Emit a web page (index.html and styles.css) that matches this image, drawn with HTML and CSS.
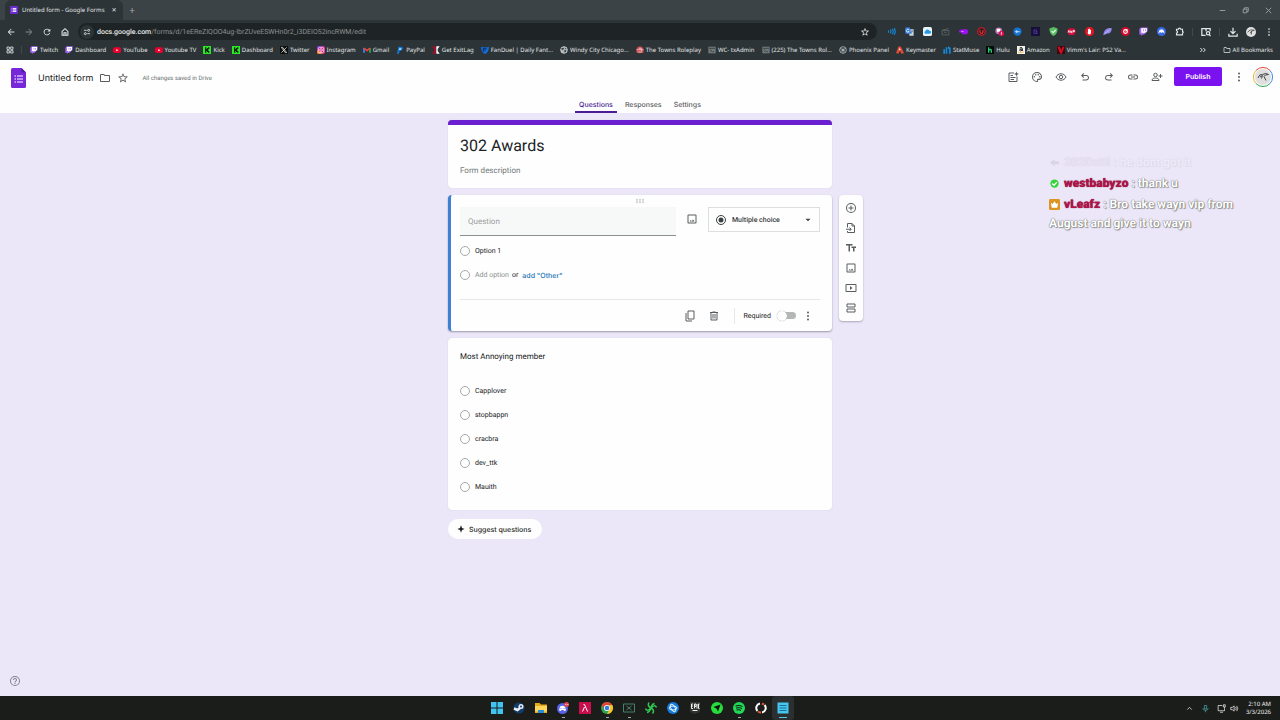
FILE: index.html
```html
<!DOCTYPE html>
<html lang="en">
<head>
<meta charset="utf-8">
<title>Untitled form - Google Forms</title>
<link rel="stylesheet" href="styles.css">
</head>
<body>
<svg class="sprite" aria-hidden="true">
	<symbol id="i-back" viewBox="0 0 24 24"><path d="M20 11H7.800l5.600-5.600L12 4l-8 8 8 8 1.400-1.400L7.800 13H20z"/></symbol>
	<symbol id="i-fwd" viewBox="0 0 24 24"><path d="M4 11h12.200l-5.600-5.600L12 4l8 8-8 8-1.400-1.400 5.600-5.600H4z"/></symbol>
	<symbol id="i-reload" viewBox="0 0 24 24"><path d="M17.650 6.350A8 8 0 1 0 19.730 14h-2.080A6 6 0 1 1 12 6c1.660 0 3.140.69 4.220 1.780L13 11h7V4z"/></symbol>
	<symbol id="i-home" viewBox="0 0 24 24"><path fill="none" stroke="currentColor" stroke-width="2.500" d="M5 10.500 12 4l7 6.500V20H5zM9.500 20v-6h5v6"/></symbol>
	<symbol id="i-tune" viewBox="0 0 24 24"><g fill="none" stroke="currentColor" stroke-width="2.500"><path d="M3 7h8M13 17h8"/><circle cx="17" cy="7" r="3"/><circle cx="7" cy="17" r="3"/></g></symbol>
	<symbol id="i-star" viewBox="0 0 24 24"><path d="m22 9.240-7.190-.62L12 2 9.190 8.630 2 9.240l5.460 4.730L5.820 21 12 17.270 18.180 21l-1.630-7.030zM12 15.400l-3.760 2.270 1-4.280-3.320-2.880 4.380-.38L12 6.100l1.710 4.040 4.380.38-3.320 2.880 1 4.280z"/></symbol>
	<symbol id="i-apps" viewBox="0 0 24 24"><path fill="none" stroke="currentColor" stroke-width="2.500" d="M3 3h7v7H3zM14 3h7v7h-7zM3 14h7v7H3zM14 14h7v7h-7z"/></symbol>
	<symbol id="i-folder" viewBox="0 0 24 24"><path d="m9.170 6 2 2H20v10H4V6zM10 4H4a2 2 0 0 0-2 2v12c0 1.100.9 2 2 2h16a2 2 0 0 0 2-2V8a2 2 0 0 0-2-2h-8z"/></symbol>
	<symbol id="i-more" viewBox="0 0 24 24"><circle cx="12" cy="5" r="2"/><circle cx="12" cy="12" r="2"/><circle cx="12" cy="19" r="2"/></symbol>
	<symbol id="i-palette" viewBox="0 0 24 24"><path d="M12 22a10 10 0 1 1 10-10c0 3.300-2.700 6-6 6h-1.700c-.3 0-.5.2-.5.5 0 .3.5.7.5 1.500 0 1.200-1 2-2.300 2m0-18a8 8 0 0 0 0 16c.3 0 .5-.2.5-.5 0-.5-.6-.7-.6-1.500 0-1.400 1.100-2.500 2.500-2.500H16c2.200 0 4-1.800 4-4C20 7.100 16.400 4 12 4"/><circle cx="6.500" cy="11.500" r="1.500"/><circle cx="9.500" cy="7.500" r="1.500"/><circle cx="14.500" cy="7.500" r="1.500"/><circle cx="17.500" cy="11.500" r="1.500"/></symbol>
	<symbol id="i-eye" viewBox="0 0 24 24"><path fill="none" stroke="currentColor" stroke-width="2" d="M2 12c2-4 5.700-6.500 10-6.500S20 8 22 12c-2 4-5.700 6.500-10 6.500S4 16 2 12z"/><circle cx="12" cy="12" r="3.500" fill="none" stroke="currentColor" stroke-width="2"/></symbol>
	<symbol id="i-undo" viewBox="0 0 24 24"><path d="M7 19v-2h7.100c1.050 0 1.960-.33 2.740-1s1.160-1.500 1.160-2.500-.39-1.830-1.160-2.500-1.690-1-2.740-1H7.800l2.600 2.600L9 14 4 9l5-5 1.400 1.400L7.800 8h6.300c1.620 0 3 .53 4.160 1.580S20 11.930 20 13.500s-.58 2.880-1.740 3.930S15.720 19 14.100 19z"/></symbol>
	<symbol id="i-redo" viewBox="0 0 24 24"><path transform="matrix(-1 0 0 1 24 0)" d="M7 19v-2h7.100c1.050 0 1.960-.33 2.740-1s1.160-1.500 1.160-2.500-.39-1.830-1.160-2.500-1.690-1-2.740-1H7.800l2.600 2.600L9 14 4 9l5-5 1.400 1.400L7.800 8h6.300c1.620 0 3 .53 4.160 1.580S20 11.930 20 13.500s-.58 2.880-1.740 3.930S15.720 19 14.100 19z"/></symbol>
	<symbol id="i-link" viewBox="0 0 24 24"><path d="M3.900 12A3.100 3.100 0 0 1 7 8.900h4V7H7a5 5 0 0 0 0 10h4v-1.900H7A3.100 3.100 0 0 1 3.900 12M8 13h8v-2H8zm9-6h-4v1.900h4a3.100 3.100 0 0 1 0 6.200h-4V17h4a5 5 0 0 0 0-10"/></symbol>
	<symbol id="i-person" viewBox="0 0 24 24"><g fill="none" stroke="currentColor" stroke-width="2"><circle cx="9" cy="8" r="3.500"/><path d="M2 19v-1c0-2.500 4-4 7-4s7 1.500 7 4v1zM19 6v8M15 10h8"/></g></symbol>
	<symbol id="i-addnote" viewBox="0 0 24 24"><path fill="none" stroke="currentColor" stroke-width="2" d="M14 4H4v17h16V11M7 9h5M7 13h10M7 17h7"/><path d="m19 1 1.300 3.700L24 6l-3.700 1.300L19 11l-1.300-3.700L14 6l3.700-1.300z"/></symbol>
	<symbol id="i-image" viewBox="0 0 24 24"><path d="M19 5v14H5V5zm0-2H5a2 2 0 0 0-2 2v14c0 1.100.9 2 2 2h14a2 2 0 0 0 2-2V5a2 2 0 0 0-2-2m-4.900 10-2.600 3.300-1.800-2.200L7 17h10z"/></symbol>
	<symbol id="i-copy" viewBox="0 0 24 24"><path fill="none" stroke="currentColor" stroke-width="2" d="M8 2h12v16H8zM4 6v16h12"/></symbol>
	<symbol id="i-trash" viewBox="0 0 24 24"><path d="M15 4V3H9v1H4v2h1v13c0 1.100.9 2 2 2h10a2 2 0 0 0 2-2V6h1V4zm2 15H7V6h10zM9 8h2v9H9zm4 0h2v9h-2z"/></symbol>
	<symbol id="i-plus" viewBox="0 0 24 24"><path d="M13 7h-2v4H7v2h4v4h2v-4h4v-2h-4zm-1-5a10 10 0 1 0 0 20 10 10 0 0 0 0-20m0 18a8 8 0 1 1 0-16 8 8 0 0 1 0 16"/></symbol>
	<symbol id="i-import" viewBox="0 0 24 24"><path fill="none" stroke="currentColor" stroke-width="2" d="M5 11V3h9l5 5v13H5v-3M14 3v5h5M2 14.500h10M9 11l3.500 3.500L9 18"/></symbol>
	<symbol id="i-text" viewBox="0 0 24 24"><path d="M2 4v3h5v12h3V7h5V4zm20 5h-9v3h3v7h3v-7h3z"/></symbol>
	<symbol id="i-video" viewBox="0 0 24 24"><path d="M10 8v8l5-4zM21 4H3a2 2 0 0 0-2 2v12c0 1.100.9 2 2 2h18a2 2 0 0 0 2-2V6a2 2 0 0 0-2-2m0 14H3V6h18z"/></symbol>
	<symbol id="i-section" viewBox="0 0 24 24"><path fill="none" stroke="currentColor" stroke-width="2" d="M4 4h16v6H4zM4 14h16v6H4z"/></symbol>
	<symbol id="i-help" viewBox="0 0 24 24"><path d="M11 18h2v-2h-2zm1-16a10 10 0 1 0 0 20 10 10 0 0 0 0-20m0 18a8 8 0 1 1 0-16 8 8 0 0 1 0 16m0-14a4 4 0 0 0-4 4h2a2 2 0 1 1 4 0c0 2-3 1.750-3 5h2c0-2.250 3-2.500 3-5a4 4 0 0 0-4-4"/></symbol>
	<symbol id="i-twitch" viewBox="0 0 24 24"><path fill="#a56bf5" d="M5 1 1 5v15h5v4l4-4h4l9-9V1z"/><path fill="#fff" d="M6 3h15v8l-4 4h-4l-3 3v-3H6z"/><path fill="#a56bf5" d="M11 6h2v5h-2zM16 6h2v5h-2z"/></symbol>
	<symbol id="i-youtube" viewBox="0 0 24 24"><rect y="4" width="24" height="17" rx="5" fill="#e8002d"/><path fill="#fff" d="m10 9 6 3.500-6 3.500z"/></symbol>
	<symbol id="i-kick" viewBox="0 0 24 24"><path fill="#2bea24" d="M0 0h24v24H0z"/><path fill="#10210f" d="M6 4h4v5h2V6h3V4h4v5h-3v6h3v5h-4v-2h-3v-3h-2v5H6z"/></symbol>
	<symbol id="i-server" viewBox="0 0 24 24"><path fill="#71787a" d="M1 2h22v20H1z"/><path stroke="#272d2f" stroke-width="2" fill="none" d="M3 7h18M7 11l4 3-4 3M13 17h5"/></symbol>
</svg>

<header class="browser">
	<div class="tabbar">
		<div class="tab">
			<svg class="fav" viewBox="0 0 24 24"><rect width="24" height="24" rx="3" fill="#6a2bd0"/><path stroke="#fff" stroke-width="3" d="M9 8h10M9 12h10M9 16h10M5 8h2M5 12h2M5 16h2"/></svg>
			<span class="tab-name">Untitled form - Google Forms</span>
			<button class="tab-x" aria-label="Close tab">✕</button>
		</div>
		<button class="tab-new" aria-label="New tab">+</button>
		<div class="win">
			<button aria-label="Minimize"><svg viewBox="0 0 12 12" fill="none"><path d="M3 6h6"/></svg></button>
			<button aria-label="Restore"><svg viewBox="0 0 12 12" fill="none"><path d="M3.500 4.500h4v4h-4zM5 4.500V3h4v4H7.500"/></svg></button>
			<button aria-label="Close"><svg viewBox="0 0 12 12" fill="none"><path d="m3 3 6 6M9 3 3 9"/></svg></button>
		</div>
	</div>
	<div class="toolbar">
		<button aria-label="Back"><svg><use href="#i-back"/></svg></button>
		<button class="dim" aria-label="Forward"><svg><use href="#i-fwd"/></svg></button>
		<button aria-label="Reload"><svg><use href="#i-reload"/></svg></button>
		<button aria-label="Home"><svg><use href="#i-home"/></svg></button>
		<div class="address">
			<span class="site"><svg><use href="#i-tune"/></svg></span>
			<span class="url"><b>docs.google.com</b>/forms/d/1eEReZIQOO4ug-IbrZUveESWHn0r2_i3DEIO52incRWM/edit</span>
			<svg><use href="#i-star"/></svg>
		</div>
		<div class="ext">
			<button aria-label="Sound"><svg viewBox="0 0 24 24" fill="none" stroke="#1688d8" stroke-width="3"><path d="M4 9v6M9 7q3 5 0 10M14 5q5 7 0 14M19 3q6 9 0 18"/></svg></button>
			<button aria-label="Translate"><svg viewBox="0 0 24 24"><path fill="#ccd6e2" d="M9 6h14v17H12z"/><path fill="#3a82e4" d="M1 1h12l4 17H1z"/><path fill="none" stroke="#fff" stroke-width="2" d="M11 8a4 4 0 1 0 0 4H8"/><path fill="none" stroke="#56708f" stroke-width="2" d="M16 11h6M19 9v2l-2 6"/></svg></button>
			<button aria-label="Cloud"><svg viewBox="0 0 24 24"><rect width="24" height="24" rx="5" fill="#e9f5fc"/><path fill="#269be3" d="M6 18a4 4 0 0 1 0-7 6 6 0 0 1 11-1 4 4 0 0 1 1 8z"/></svg></button>
			<button aria-label="Clips"><svg viewBox="0 0 24 24" fill="none" stroke="#646b6e" stroke-width="2"><path d="M3 9h18v12H3zM3 9l17-5M8 14h8"/></svg></button>
			<button aria-label="Badge"><svg viewBox="0 0 24 24"><path fill="#9b12ef" d="M0 9 8 6h12l4 3v7l-4 3H9l-3-4-6-1z"/><path stroke="#e3b3ff" stroke-width="2" d="M6 12h6"/></svg></button>
			<button aria-label="Shield"><svg viewBox="0 0 24 24"><circle cx="12" cy="12" r="10" fill="#27191a" stroke="#e31b27" stroke-width="3"/><path fill="none" stroke="#e8353b" stroke-width="3" d="M8 7v6q0 4 4 4t4-4V7"/></svg></button>
			<button aria-label="Alerts"><svg viewBox="0 0 24 24"><circle cx="10" cy="10" r="9" fill="#bb7ab8"/><path fill="#fff" d="M5 5h9v8H5z"/><circle cx="17" cy="17" r="7" fill="#d90e51"/><path stroke="#fff" stroke-width="2" d="M17 13v8"/></svg></button>
			<button aria-label="Globe"><svg viewBox="0 0 24 24"><circle cx="12" cy="12" r="11" fill="#1673cf"/><path fill="#c2dfff" d="m5 12 6-4v3h7v3h-7v3z"/></svg></button>
			<button aria-label="Frame"><svg viewBox="0 0 24 24"><rect width="24" height="24" fill="#171039"/><path fill="none" stroke="#6140bb" stroke-width="2" d="M16 8H8v9h8v-5h-4"/></svg></button>
			<button aria-label="Guard"><svg viewBox="0 0 24 24"><path fill="#5bbd62" d="m12 0 11 4c0 10-3 16-11 20C4 20 1 14 1 4z"/><path fill="none" stroke="#e3ffe3" stroke-width="3" d="m7 11 4 4 7-7"/></svg></button>
			<button aria-label="Adblock Plus"><svg viewBox="0 0 24 24"><path fill="#d40d3c" d="M5 3h14l5 9-5 9H5l-5-9z"/><path fill="none" stroke="#fff" stroke-width="2" d="m3 15 2-6 2 6M10 9v6h3v-3h-3M16 15V9h4v3h-4"/></svg></button>
			<button aria-label="Adblock"><svg viewBox="0 0 24 24"><path fill="#dc1424" d="M7 0h10l7 7v10l-7 7H7l-7-7V7z"/><path fill="#fff" d="M8 11V6h2V4h2v2h2v2h2v8q-1 4-5 4-3-1-4-5z"/></svg></button>
			<button aria-label="Wing"><svg viewBox="0 0 24 24"><path fill="#9386e8" d="M1 22C2 9 9 2 23 3c1 9-5 15-12 14z"/><path stroke="#c9c3ff" stroke-width="2" d="M5 18 17 8"/></svg></button>
			<button aria-label="Target"><svg viewBox="0 0 24 24"><circle cx="12" cy="12" r="12" fill="#d4082c"/><circle cx="12" cy="12" r="5" fill="none" stroke="#fff" stroke-width="3"/><path stroke="#fff" stroke-width="3" d="m12 12 5-6"/></svg></button>
			<button aria-label="Twitch"><svg><use href="#i-twitch"/></svg></button>
			<button aria-label="Nord"><svg viewBox="0 0 24 24"><circle cx="12" cy="12" r="12" fill="#3569e3"/><path fill="#fff" d="M4 18q0-11 8-12 8 1 8 12l-4-5-4 3-4-3z"/></svg></button>
			<button aria-label="Extensions"><svg viewBox="0 0 24 24" fill="none" stroke="currentColor" stroke-width="3"><path d="M4 6h5a3 3 0 0 1 6 0h5v6a2 2 0 0 1 0 4v5H4v-5a3 3 0 0 0 0-6z"/></svg></button>
		</div>
		<span class="sep"></span>
		<button aria-label="Side panel"><svg viewBox="0 0 24 24" fill="none" stroke="currentColor" stroke-width="3"><path d="M11 20H2V4h20v6M12 4v6"/><circle cx="17" cy="15" r="4"/><path d="m20 18 3 4"/></svg></button>
		<span class="sep"></span>
		<button aria-label="Downloads"><svg viewBox="0 0 24 24" fill="none" stroke="currentColor" stroke-width="3"><path d="M12 2v13M6 10l6 6 6-6M2 16v6h20v-6"/></svg></button>
		<button aria-label="Profile"><svg viewBox="0 0 24 24"><circle cx="12" cy="12" r="12" fill="#dfe1df"/><path fill="none" stroke="#484b4b" stroke-width="2" d="M4 13q5-9 16-5-8 0-10 7M13 10v8"/></svg></button>
		<button aria-label="Menu"><svg><use href="#i-more"/></svg></button>
	</div>
	<nav class="bookmarks">
		<svg class="apps"><use href="#i-apps"/></svg>
		<span class="bar"></span>
		<a href="#"><svg><use href="#i-twitch"/></svg>Twitch</a>
		<a href="#"><svg><use href="#i-twitch"/></svg>Dashboard</a>
		<a href="#"><svg><use href="#i-youtube"/></svg>YouTube</a>
		<a href="#"><svg><use href="#i-youtube"/></svg>Youtube TV</a>
		<a href="#"><svg><use href="#i-kick"/></svg>Kick</a>
		<a href="#"><svg><use href="#i-kick"/></svg>Dashboard</a>
		<a href="#"><svg viewBox="0 0 24 24"><path fill="#0c0e0e" d="M0 0h24v24H0z"/><path fill="none" stroke="#fff" stroke-width="2" d="M4 4h4l12 16h-4zM20 4 4 20"/></svg>Twitter</a>
		<a href="#"><svg viewBox="0 0 24 24"><rect width="24" height="24" rx="5" fill="#d92b91"/><path fill="#f5852b" d="M0 15q12-2 15 9H5q-5 0-5-5z"/><path fill="#8335d5" d="M5 0h11Q12 6 0 8V5q0-5 5-5z"/><g fill="none" stroke="#fff" stroke-width="2"><rect x="4" y="4" width="16" height="16" rx="4"/><circle cx="12" cy="12" r="4"/></g></svg>Instagram</a>
		<a href="#"><svg viewBox="0 0 24 24" fill="none" stroke-width="5"><path stroke="#4285f4" d="M3 20V6"/><path stroke="#34a853" d="M21 20V6"/><path stroke="#ea4335" d="m3 6 9 8 9-8"/></svg>Gmail</a>
		<a href="#"><svg viewBox="0 0 24 24"><path fill="#1577d4" d="M7 2h10q6 2 3 8-2 5-9 5l-2 8H3z"/><path fill="#b8e6ff" d="M10 7h6q2 4-3 5h-4z"/></svg>PayPal</a>
		<a href="#"><svg viewBox="0 0 24 24"><path fill="#9d1029" d="M0 1h12v22H0l7-11z"/><path fill="#fff" d="M13 1h10l-6 8v6l6 8H13z"/></svg>Get ExitLag</a>
		<a href="#"><svg viewBox="0 0 24 24"><path fill="#166bd6" d="M0 2q12 3 24 0 0 17-12 22Q0 19 0 2"/><path fill="none" stroke="#0c3167" stroke-width="3" d="M7 17V7h10M7 12h8"/></svg>FanDuel | Daily Fant...</a>
		<a href="#"><svg viewBox="0 0 24 24"><circle cx="12" cy="12" r="10" fill="#a9afb0" stroke="#eee" stroke-width="2"/><path fill="#323b3d" d="M4 7q7-4 8 0l-3 5-5-2zM13 13h7q-2 7-6 7zM14 4l6 4-3 2z"/></svg>Windy City Chicago...</a>
		<a href="#"><svg viewBox="0 0 24 24"><path fill="#c84c4e" d="M1 9q3-8 11-8t11 8v10q-11 6-22 0z"/><path fill="none" stroke="#f6dddd" stroke-width="2" d="M2 11h20M5 18h14M8 7h8v9"/></svg>The Towns Roleplay</a>
		<a href="#"><svg><use href="#i-server"/></svg>WC- txAdmin</a>
		<a href="#"><svg><use href="#i-server"/></svg>(225) The Towns Rol...</a>
		<a href="#"><svg viewBox="0 0 24 24" fill="none" stroke="#d8dcdc" stroke-width="2"><circle cx="12" cy="12" r="10"/><path d="M5 6q3 6 7 6t7-6M12 7v13M6 16l6-4 6 4"/></svg>Phoenix Panel</a>
		<a href="#"><svg viewBox="0 0 24 24"><path fill="#e34a34" d="m8 1 7 1 9 20-8 1-4-9-5 9-7-2z"/><path fill="#fff" d="m11 6 3 5-6 2z"/></svg>Keymaster</a>
		<a href="#"><svg viewBox="0 0 24 24"><path fill="#1688d8" d="M1 10h5v13H1zM8 4h5v19H8zM15 1l8 4v18h-5V10l-3-2z"/></svg>StatMuse</a>
		<a href="#"><svg viewBox="0 0 24 24"><path fill="#070b09" d="M0 0h24v24H0z"/><path fill="none" stroke="#28c774" stroke-width="4" d="M8 4v16M8 12q8-4 8 2v6"/></svg>Hulu</a>
		<a href="#"><svg viewBox="0 0 24 24"><path fill="#f3f3ef" d="M0 0h24v24H0z"/><path fill="none" stroke="#161616" stroke-width="3" d="M8 6q8-4 8 2v7M15 9q-8 0-7 4t8-1"/><path fill="none" stroke="#f5a020" stroke-width="2" d="M3 18q9 6 18-1"/></svg>Amazon</a>
		<a href="#"><svg viewBox="0 0 24 24"><path fill="#3a0910" d="M0 0h24v24H0z"/><path fill="#d10e20" d="M1 2h8l4 10 4-10h6l-9 21h-4z"/></svg>Vimm's Lair: PS2 Va...</a>
		<button class="over" aria-label="More bookmarks"><svg viewBox="0 0 24 24" fill="none" stroke="currentColor" stroke-width="3"><path d="m4 6 6 6-6 6M13 6l6 6-6 6"/></svg></button>
		<a href="#"><svg><use href="#i-folder"/></svg>All Bookmarks</a>
	</nav>
</header>

<div class="app">
	<div class="app-top">
		<div class="doc">
			<svg class="logo" viewBox="0 0 30 40"><path fill="#7627d8" d="M3 0h18l9 9v28q0 3-3 3H3q-3 0-3-3V3q0-3 3-3"/><path fill="#4e1a9e" d="M21 0v6q0 3 3 3h6z"/><path stroke="#fff" stroke-width="2" d="M12 16h12M12 22h12M12 28h12M7 16h3M7 22h3M7 28h3"/></svg>
			<span class="form-name">Untitled form</span>
			<button aria-label="Move to folder"><svg><use href="#i-folder"/></svg></button>
			<button aria-label="Star"><svg><use href="#i-star"/></svg></button>
			<span class="saved">All changes saved in Drive</span>
		</div>
		<div class="actions">
			<button aria-label="Help me create"><svg><use href="#i-addnote"/></svg></button>
			<button aria-label="Customize theme"><svg><use href="#i-palette"/></svg></button>
			<button aria-label="Preview"><svg><use href="#i-eye"/></svg></button>
			<button aria-label="Undo"><svg><use href="#i-undo"/></svg></button>
			<button aria-label="Redo"><svg><use href="#i-redo"/></svg></button>
			<button aria-label="Copy link"><svg><use href="#i-link"/></svg></button>
			<button aria-label="Share"><svg><use href="#i-person"/></svg></button>
		</div>
		<button class="publish">Publish</button>
		<button class="dots" aria-label="More"><svg><use href="#i-more"/></svg></button>
		<svg class="avatar" viewBox="0 0 40 40"><g fill="none" stroke-width="2"><path stroke="#e34b42" d="M6 7a19 19 0 0 1 28 0"/><path stroke="#4285f4" d="M34 7a19 19 0 0 1 0 26"/><path stroke="#34a853" d="M34 33a19 19 0 0 1-28 0"/><path stroke="#e8b52c" d="M6 33a19 19 0 0 1 0-26"/></g><circle cx="20" cy="20" r="16" fill="#dedfde"/><path fill="none" stroke="#444" stroke-width="2" d="M10 22q3-9 9-7 7-4 12 0-8 0-9 4l4 8M14 20l5-3-2 6"/></svg>
	</div>
	<nav class="tabs">
		<a href="#" class="on">Questions</a>
		<a href="#">Responses</a>
		<a href="#">Settings</a>
	</nav>
</div>

<main class="page">
	<section class="card title-card">
		<h1>302 Awards</h1>
		<p>Form description</p>
	</section>

	<section class="card question">
		<div class="grip"><svg viewBox="0 0 16 10"><path d="M2 2h2v2H2zM7 2h2v2H7zM12 2h2v2h-2zM2 6h2v2H2zM7 6h2v2H7zM12 6h2v2h-2z"/></svg></div>
		<div class="q-row">
			<input type="text" class="q-text" placeholder="Question" aria-label="Question">
			<button aria-label="Add image"><svg><use href="#i-image"/></svg></button>
			<div class="q-type">
				<svg viewBox="0 0 24 24"><circle cx="12" cy="12" r="9" fill="none" stroke="currentColor" stroke-width="2"/><circle cx="12" cy="12" r="5"/></svg>
				<select aria-label="Question type"><option>Multiple choice</option></select>
				<svg class="caret" viewBox="0 0 24 24"><path d="m6 9 6 6 6-6z"/></svg>
			</div>
		</div>
		<label class="opt first"><input type="radio" name="q1">Option 1</label>
		<div class="opt"><input type="radio" name="q1" aria-label="Add option"><span class="grey">Add option</span><span class="or">or</span><a href="#">add "Other"</a></div>
		<div class="q-foot">
			<button aria-label="Duplicate"><svg><use href="#i-copy"/></svg></button>
			<button aria-label="Delete"><svg><use href="#i-trash"/></svg></button>
			<span class="rule"></span>
			<label class="req">Required<input type="checkbox" class="switch"></label>
			<button aria-label="More options"><svg><use href="#i-more"/></svg></button>
		</div>
	</section>

	<aside class="side">
		<button aria-label="Add question"><svg><use href="#i-plus"/></svg></button>
		<button aria-label="Import questions"><svg><use href="#i-import"/></svg></button>
		<button aria-label="Add title"><svg><use href="#i-text"/></svg></button>
		<button aria-label="Add image"><svg><use href="#i-image"/></svg></button>
		<button aria-label="Add video"><svg><use href="#i-video"/></svg></button>
		<button aria-label="Add section"><svg><use href="#i-section"/></svg></button>
	</aside>

	<section class="card answers">
		<h2>Most Annoying member</h2>
		<label class="opt"><input type="radio" name="q2">Capplover</label>
		<label class="opt"><input type="radio" name="q2">stopbappn</label>
		<label class="opt"><input type="radio" name="q2">cracbra</label>
		<label class="opt"><input type="radio" name="q2">dev_ttk</label>
		<label class="opt"><input type="radio" name="q2">Mauith</label>
	</section>

	<button class="suggest"><svg viewBox="0 0 24 24"><path d="m12 1 3 8 8 3-8 3-3 8-3-8-8-3 8-3z"/></svg>Suggest questions</button>
	<button class="help" aria-label="Help"><svg><use href="#i-help"/></svg></button>
</main>

<div class="chat">
	<p class="old"><svg viewBox="0 0 24 24"><path fill="#777" d="m2 12 10-7v4h10v7H12v4z"/></svg><b>302Dxtti</b> : he dont got it</p>
	<p><svg viewBox="0 0 24 24"><circle cx="12" cy="12" r="9" fill="#35d43b"/><path fill="none" stroke="#fff" stroke-width="3" d="m7 12 4 4 6-7"/></svg><b>westbabyzo</b> : thank u</p>
	<p><svg viewBox="0 0 24 24"><rect width="24" height="24" rx="3" fill="#dc9522"/><path fill="#fff" d="m4 8 4 3 4-6 4 6 4-3-2 11H6z"/></svg><b>vLeafz</b> : Bro take wayn vip from<br>August and give it to wayn</p>
</div>

<footer class="taskbar">
	<div class="programs">
		<button aria-label="Start"><svg viewBox="0 0 24 24"><path fill="#3fc5f0" d="M0 0h11v11H0zM13 0h11v11H13zM0 13h11v11H0zM13 13h11v11H13z"/></svg></button>
		<button aria-label="Steam"><svg viewBox="0 0 24 24"><circle cx="12" cy="12" r="11" fill="#143c6e"/><circle cx="16" cy="9" r="5" fill="#e8eef4"/><circle cx="16" cy="9" r="2" fill="#143c6e"/><path fill="none" stroke="#e8eef4" stroke-width="5" d="m2 13 7 3 5-4"/></svg></button>
		<button aria-label="Files"><svg viewBox="0 0 24 24"><path fill="#e5a91c" d="M0 2h9l3 3h12v17H0z"/><path fill="#ffd65b" d="M0 8h24v11H0z"/><path fill="#288bd8" d="M6 16h12v6H6z"/></svg></button>
		<button class="open" aria-label="Discord"><svg viewBox="0 0 24 24"><circle cx="11" cy="13" r="11" fill="#5662e8"/><path fill="#fff" d="M6 9q5-3 10 0l2 8-4 1-1-2h-4l-1 2-4-1z"/><circle cx="8" cy="13" r="1" fill="#5662e8"/><circle cx="14" cy="13" r="1" fill="#5662e8"/><circle cx="19" cy="5" r="5" fill="#dd4650"/><path stroke="#fff" d="M16 5h3M20 5h3"/></svg></button>
		<button aria-label="Launcher"><svg viewBox="0 0 24 24"><path fill="#c80e4c" d="M0 0h24v24H0z"/><path fill="none" stroke="#fff" stroke-width="2" d="m7 19 4-9M9 5h2l6 14"/></svg></button>
		<button class="open" aria-label="Chrome"><svg viewBox="0 0 24 24"><circle cx="12" cy="12" r="12" fill="#32a350"/><path fill="#e54435" d="M1.600 6a12 12 0 0 1 20.800 0H12l-5 9z"/><path fill="#fac32d" d="M22.400 6A12 12 0 0 1 12 24l5-9V6z"/><circle cx="12" cy="12" r="6" fill="#fff"/><circle cx="12" cy="12" r="4.500" fill="#347de0"/></svg></button>
		<button class="open" aria-label="Remote"><svg viewBox="0 0 24 24" fill="none" stroke="#44816e" stroke-width="2"><path d="M1 4h22v16H1zM7 8l10 8M17 8 7 16"/></svg></button>
		<button aria-label="Razer"><svg viewBox="0 0 24 24" fill="none" stroke="#32c952" stroke-width="3"><path d="M12 12Q4 8 8 1M12 12q8-8 11-1M12 12q8 4 3 11M12 12q-8 8-11 1M12 12q2-8 7-9M12 12q-3 8-8 9"/></svg></button>
		<button aria-label="Battle.net"><svg viewBox="0 0 24 24"><circle cx="12" cy="12" r="12" fill="#1479dc"/><g fill="none" stroke="#e1f3ff" stroke-width="2"><ellipse cx="12" cy="12" rx="8" ry="4"/><ellipse cx="12" cy="12" rx="8" ry="4" transform="rotate(60 12 12)"/></g></svg></button>
		<button aria-label="Epic Games"><svg viewBox="0 0 24 24"><path fill="#323232" d="M2 0h20v20l-10 4-10-4z"/><path fill="none" stroke="#eee" stroke-width="2" d="M8 4H5v9h3M5 8h3M11 13V4h3v5h-3M16 4v9M21 4h-2v9h2M7 17h10"/></svg></button>
		<button aria-label="Navigator"><svg viewBox="0 0 24 24"><circle cx="12" cy="12" r="12" fill="#26df3c"/><path fill="#111" d="m19 5-5 14-3-6-6-3z"/></svg></button>
		<button class="open" aria-label="Spotify"><svg viewBox="0 0 24 24"><circle cx="12" cy="12" r="12" fill="#20d957"/><path fill="none" stroke="#111" stroke-width="2" d="M5 8q8-3 14 1M6 12q7-2 12 1M7 16q5-2 9 1"/></svg></button>
		<button aria-label="Recorder"><svg viewBox="0 0 24 24" fill="none" stroke-width="4"><path stroke="#fff" d="M10 3A9 9 0 0 0 5 18M14 21a9 9 0 0 0 5-15"/><path stroke="#e25432" d="M6 19q3 2 6 2M18 5l-4-2"/></svg></button>
		<button class="open now" aria-label="Notepad"><svg viewBox="0 0 24 24"><path fill="#47c7ed" d="M1 1h22v22H1z"/><path stroke="#176d96" stroke-width="2" d="M5 7h14M5 12h14M5 17h14"/></svg></button>
	</div>
	<div class="tray">
		<svg viewBox="0 0 24 24" fill="none"><path d="m6 15 6-6 6 6"/></svg>
		<svg viewBox="0 0 24 24" fill="none" class="mic"><path d="M9 4h6v9H9zM5 11q0 6 7 6t7-6M12 17v5"/></svg>
		<svg viewBox="0 0 24 24" fill="none"><path d="M14 4H3v14h17v-6M8 22h8M17 2h5v6h-5zM20 8v4"/></svg>
		<svg viewBox="0 0 24 24" fill="none"><path d="M2 9h4l5-4v14l-5-4H2zM15 8q3 4 0 8M18 5q5 7 0 14"/></svg>
		<div class="clock">2:10 AM<br>3/3/2026</div>
	</div>
</footer>
</body>
</html>
```
FILE: styles.css
```css
*
{
	box-sizing:border-box;
}
body
{
	margin:0;
	min-height:100vh;
	display:flex;
	flex-direction:column;
	background:#ebe7f9;
	color:#202124;
	font-family:Roboto,"Liberation Sans",sans-serif;
	font-size:8px;
	text-rendering:geometricPrecision;
}
button
{
	display:flex;
	align-items:center;
	justify-content:center;
	padding:0;
	border:0;
	background:none;
	color:inherit;
	font-family:inherit;
	text-rendering:inherit;
}
input,select
{
	text-rendering:inherit;
}
svg
{
	display:block;
	flex:none;
}
svg:not([fill])
{
	fill:currentColor;
}
a
{
	color:inherit;
	text-decoration:none;
}
h1,h2,p
{
	margin:0;
	font-weight:400;
}
.sprite
{
	position:absolute;
	width:0;
	height:0;
}

/* browser */
.browser
{
	background:#2c3437;
	color:#e2e5e6;
	font-family:"Noto Sans","Open Sans",sans-serif;
	font-size:6px;
}
.tabbar
{
	display:flex;
	align-items:center;
	height:20px;
	padding-left:5px;
	background:#3b4346;
}
.tab
{
	display:flex;
	align-items:center;
	width:118px;
	height:20px;
	padding:0 5px;
	gap:4px;
	border-radius:6px 6px 0 0;
	background:#2c3437;
}
.fav
{
	width:8px;
	height:8px;
}
.tab-name
{
	flex:1;
	white-space:nowrap;
}
.tab-x
{
	width:8px;
	font-size:6px;
}
.tab-new
{
	width:18px;
	color:#a5abad;
	font-size:10px;
}
.win
{
	display:flex;
	margin-left:auto;
	color:#9ca2a4;
}
.win button
{
	width:23px;
}
.win svg
{
	width:11px;
	height:11px;
	stroke:currentColor;
}
.toolbar
{
	display:flex;
	align-items:center;
	height:23px;
	padding:0 2px;
}
.toolbar button
{
	width:18px;
	height:18px;
}
.toolbar svg
{
	width:10px;
	height:10px;
}
.dim
{
	color:#80878a;
}
.address
{
	display:flex;
	align-items:center;
	flex:1;
	height:17px;
	margin:0 5px 0 4px;
	padding:0 7px 0 2px;
	gap:3px;
	border-radius:9px;
	background:#1e2425;
}
.site
{
	display:flex;
	align-items:center;
	justify-content:center;
	width:14px;
	height:14px;
	border-radius:50%;
	background:#2c3437;
}
.address .site svg
{
	width:8px;
	height:8px;
}
.url
{
	flex:1;
	color:#8b9294;
	font-family:Roboto,sans-serif;
	font-size:7px;
}
.url b
{
	color:#e8eaea;
	font-weight:500;
}
.ext
{
	display:flex;
}
.toolbar .ext svg
{
	width:9px;
	height:9px;
}
.sep
{
	width:1px;
	height:8px;
	margin:0 4px;
	background:#41494c;
}
.bookmarks
{
	display:flex;
	align-items:center;
	height:17px;
	padding:0 7px 3px 6px;
	gap:7px;
	white-space:nowrap;
}
.bookmarks a
{
	display:flex;
	align-items:center;
	gap:2px;
}
.bookmarks svg
{
	width:8px;
	height:8px;
}
.bar
{
	width:1px;
	height:8px;
	margin-right:1px;
	background:#41494c;
}
.over
{
	width:12px;
	margin:0 7px 0 auto;
}

/* forms header */
.app
{
	background:#fdfefd;
	color:#5a5d60;
}
.app-top
{
	display:flex;
	align-items:center;
	height:33px;
	padding:0 7px 0 11px;
}
.doc
{
	display:flex;
	align-items:center;
	padding-top:3px;
}
.logo
{
	width:15px;
	height:20px;
	margin-right:12px;
}
.form-name
{
	margin-right:3px;
	color:#202124;
	font-family:Inter,sans-serif;
	font-size:9px;
}
.app-top button
{
	width:18px;
}
.app-top button svg
{
	width:12px;
	height:12px;
}
.saved
{
	margin-left:10px;
	color:#6a6e70;
	font-size:6px;
}
.actions
{
	display:flex;
	margin-left:auto;
}
.app-top .actions button
{
	width:24px;
}
.app-top .publish
{
	width:48px;
	height:19px;
	margin:0 8px 0 5px;
	border-radius:2px;
	background:#7a12f0;
	color:#fff;
	font-family:Inter,sans-serif;
	font-size:7px;
	font-weight:600;
}
.avatar
{
	width:20px;
	height:20px;
	margin-left:5px;
}
.tabs
{
	display:flex;
	justify-content:center;
	gap:4px;
	font-family:Inter,sans-serif;
	font-size:7px;
	font-weight:500;
}
.tabs a
{
	height:20px;
	padding:7px 4px 0;
	line-height:9px;
}
.tabs .on
{
	border-bottom:2px solid #4b1c94;
	color:#4b1c94;
}

/* form */
.page
{
	display:grid;
	flex:1;
	grid-template-columns:1fr minmax(0,384px) 1fr;
	grid-auto-rows:max-content;
	align-content:start;
	column-gap:7px;
	row-gap:7px;
	padding-top:7px;
}
.card
{
	grid-column:2;
	border-radius:4px;
	background:#fdfefd;
	box-shadow:0 0 1px #bdb8cf;
}
.title-card
{
	padding:13px 12px 12px;
	border-top:5px solid #6a1fd0;
}
.title-card h1
{
	font-size:16px;
	line-height:16px;
}
.title-card p
{
	margin-top:12px;
	color:#74787a;
	font-size:8px;
	line-height:10px;
}
.question
{
	padding:0 12px 0 9px;
	border-left:3px solid #3f80d5;
	box-shadow:0 1px 2px #9a97a8;
}
.grip
{
	display:flex;
	justify-content:center;
	height:12px;
	padding-top:3px;
	color:#9a9da0;
}
.grip svg
{
	width:10px;
	height:6px;
}
.q-row
{
	display:flex;
	align-items:flex-start;
}
.q-text
{
	flex:1;
	min-width:0;
	height:29px;
	padding:0 8px;
	border:0;
	border-bottom:1px solid #8b8f90;
	background:#f7f9f8;
	font-family:inherit;
	font-size:8px;
}
.q-text::placeholder
{
	color:#9a9e9f;
}
.question button
{
	width:24px;
	height:24px;
	color:#5a5d60;
}
.q-row button
{
	margin:0 4px;
}
.question button svg
{
	width:12px;
	height:12px;
}
.q-type
{
	display:flex;
	align-items:center;
	width:112px;
	height:25px;
	padding:0 6px;
	border:1px solid #dcdfe0;
	color:#3c4043;
}
.q-type svg
{
	width:12px;
	height:12px;
}
.q-type .caret
{
	width:10px;
	height:10px;
}
.q-type select
{
	flex:1;
	padding:0 0 0 5px;
	border:0;
	background:none;
	color:inherit;
	font-family:inherit;
	font-size:7px;
	font-weight:500;
	appearance:none;
}
.opt
{
	display:flex;
	align-items:center;
	height:24px;
	gap:5px;
	font-size:7px;
}
.opt.first
{
	margin-top:3px;
}
.opt input
{
	width:10px;
	height:10px;
	margin:0;
	border:1px solid #a6aaab;
	border-radius:50%;
	appearance:none;
}
.opt .grey
{
	color:#8b8f91;
}
.opt .or
{
	margin:0 -2px;
}
.opt a
{
	margin-left:1px;
	color:#1873b8;
	font-family:Inter,sans-serif;
	font-weight:500;
}
.q-foot
{
	display:flex;
	align-items:center;
	justify-content:flex-end;
	height:32px;
	margin-top:12px;
	border-top:1px solid #e5e8e8;
}
.rule
{
	width:1px;
	height:16px;
	margin:0 8px;
	background:#e5e8e8;
}
.req
{
	display:flex;
	align-items:center;
	gap:8px;
	font-size:7px;
}
.switch
{
	display:flex;
	align-items:center;
	width:17px;
	height:7px;
	margin:0;
	border-radius:4px;
	background:#b5b6b6;
	appearance:none;
}
.switch::before
{
	content:"";
	width:10px;
	height:10px;
	margin-left:-2px;
	flex:none;
	border-radius:50%;
	background:#fff;
	box-shadow:0 0 1px #888;
}
.side
{
	grid-column:3;
	grid-row:2;
	align-self:start;
	width:24px;
	padding:3px 0;
	border-radius:4px;
	background:#fdfefd;
	box-shadow:0 1px 2px #aaa6b8;
	color:#5a5d60;
}
.side button
{
	width:24px;
	height:20px;
}
.side svg
{
	width:12px;
	height:12px;
}
.answers
{
	padding:13px 12px 11px;
}
.answers h2
{
	margin-bottom:17px;
	font-size:8px;
	line-height:11px;
}
.suggest
{
	grid-column:2;
	justify-self:start;
	height:20px;
	margin-top:2px;
	padding:0 11px 0 9px;
	gap:4px;
	border-radius:10px;
	background:#fdfefd;
	color:#1d1f22;
	font-family:Inter,sans-serif;
	font-size:7px;
	font-weight:500;
}
.suggest svg
{
	width:8px;
	height:8px;
}
.help
{
	position:fixed;
	bottom:33px;
	left:9px;
	color:#83808f;
}
.help svg
{
	width:12px;
	height:12px;
}

/* stream chat over the page */
.chat
{
	position:absolute;
	top:153px;
	right:31px;
	width:200px;
	color:#fff;
	font-size:12px;
	text-shadow:0 0 1px #777,0 0 1px #777,1px 1px 1px #999;
}
.chat p
{
	margin-bottom:2px;
	font-weight:700;
	line-height:19px;
	white-space:nowrap;
}
.chat b
{
	color:#b0124a;
	font-weight:900;
	text-shadow:0 0 1px #700c30;
}
.chat svg
{
	display:inline-block;
	width:11px;
	height:11px;
	margin-right:4px;
	vertical-align:-2px;
}
.chat .old
{
	opacity:.15;
}
.chat .old b
{
	color:#ccc;
}

/* taskbar */
.taskbar
{
	display:flex;
	align-items:center;
	justify-content:center;
	position:relative;
	height:24px;
	background:#1b1d1b;
	color:#eee;
}
.programs
{
	display:flex;
}
.programs button
{
	position:relative;
	width:22px;
	height:24px;
}
.programs svg
{
	width:12px;
	height:12px;
}
.open::after
{
	content:"";
	position:absolute;
	bottom:2px;
	width:3px;
	height:1px;
	background:#aaa;
}
.programs .now
{
	border-radius:3px;
	background:#2b2f2f;
}
.now::after
{
	width:8px;
	background:#52c8ec;
}
.tray
{
	display:flex;
	align-items:center;
	position:absolute;
	right:9px;
	gap:4px;
}
.tray svg
{
	width:9px;
	height:9px;
	stroke:currentColor;
	stroke-width:2;
}
.tray .mic
{
	margin:0 3px;
	color:#49a3a9;
}
.clock
{
	margin-left:3px;
	font-family:"Noto Sans",sans-serif;
	font-size:6px;
	line-height:8px;
	text-align:right;
}
```
